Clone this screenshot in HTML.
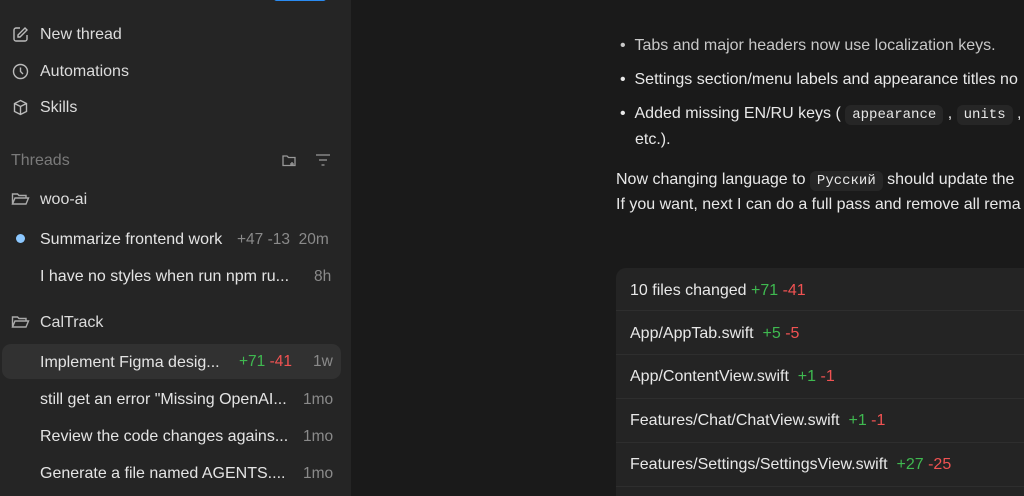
<!DOCTYPE html>
<html><head><meta charset="utf-8"><style>
*{margin:0;padding:0;box-sizing:border-box}
html,body{width:1024px;height:496px;overflow:hidden}
body{background:#1a1a1a;font-family:"Liberation Sans",sans-serif;color:#e6e6e6;position:relative}
.sb{position:absolute;left:0;top:0;width:351px;height:496px;background:#252525}
.a{position:absolute;white-space:nowrap}
.nav{font-size:16px;color:#dcdcdc}
.ic{position:absolute}
.t{font-size:16px;color:#e4e4e4}
.m{font-size:15.5px;color:#8a8a8a}
.g{color:#3fb950}.r{color:#f05252}
.main{font-size:16px;color:#e8e8e8}
code{font-family:"Liberation Mono",monospace;font-size:14px;background:#262626;border-radius:6px;padding:2px 7px}
.card{position:absolute;left:616px;top:268px;width:420px;height:228px;background:#242424;border-radius:10px 10px 0 0;overflow:hidden}
.row{position:absolute;left:0;width:420px;border-top:1px solid #2e2e2e}
</style></head><body>
<div class="sb">
<div class="a" style="left:274px;top:-4px;width:52px;height:5px;background:#2a8bf2;border-radius:3px"></div>
<svg class="ic" style="left:12px;top:26px" width="17" height="17" viewBox="0 0 17 17" fill="none" stroke="#bbb" stroke-width="1.4"><path d="M8 2H4a2 2 0 0 0-2 2v9a2 2 0 0 0 2 2h9a2 2 0 0 0 2-2V9"/><path d="M13 2l2 2-7 7H6V9z"/></svg>
<div class="a nav" style="left:40px;top:26px">New thread</div>
<svg class="ic" style="left:12px;top:63px" width="17" height="17" viewBox="0 0 17 17" fill="none" stroke="#bbb" stroke-width="1.4"><circle cx="8.5" cy="8.5" r="7"/><path d="M8.5 4.5v4l2.5 2.5"/></svg>
<div class="a nav" style="left:40px;top:63px">Automations</div>
<svg class="ic" style="left:12px;top:99px" width="17" height="17" viewBox="0 0 17 17" fill="none" stroke="#bbb" stroke-width="1.4"><path d="M8.5 1.5l6 3v8l-6 3-6-3v-8z M2.5 4.5l6 3 6-3 M8.5 7.5v8"/></svg>
<div class="a nav" style="left:40px;top:99px">Skills</div>
<div class="a" style="left:11px;top:152px;font-size:16px;color:#7a7a7a">Threads</div>
<svg class="ic" style="left:281px;top:152px" width="16" height="16" viewBox="0 0 16 16" fill="none" stroke="#999" stroke-width="1.3"><path d="M2 4h4l1.5 1.5H14v8H2z M11 10v4 M9 12h4"/></svg>
<svg class="ic" style="left:315px;top:153px" width="16" height="14" viewBox="0 0 16 14" fill="none" stroke="#999" stroke-width="1.3"><path d="M1 2h14M4 7h8M6.5 12h3"/></svg>
<svg class="ic" style="left:11px;top:191px" width="19" height="16" viewBox="0 0 19 16" fill="none" stroke="#aaa" stroke-width="1.4"><path d="M1.5 13V3h5l1.5 1.5h7V7 M1.5 13l2.5-6h13.5l-2.5 6z"/></svg>
<div class="a nav" style="left:40px;top:191px">woo-ai</div>
<div class="a" style="left:16px;top:234px;width:9px;height:9px;border-radius:50%;background:#8cc8ff"></div>
<div class="a t" style="left:40px;top:231px">Summarize frontend work</div>
<div class="a m" style="left:237px;top:231px">+47 -13 &nbsp;20m</div>
<div class="a t" style="left:40px;top:268px">I have no styles when run npm ru...</div>
<div class="a m" style="left:314px;top:268px">8h</div>
<svg class="ic" style="left:11px;top:314px" width="19" height="16" viewBox="0 0 19 16" fill="none" stroke="#aaa" stroke-width="1.4"><path d="M1.5 13V3h5l1.5 1.5h7V7 M1.5 13l2.5-6h13.5l-2.5 6z"/></svg>
<div class="a nav" style="left:40px;top:314px">CalTrack</div>
<div class="a" style="left:2px;top:344px;width:339px;height:35px;background:#313131;border-radius:9px"></div>
<div class="a t" style="left:40px;top:354px">Implement Figma desig...</div>
<div class="a m" style="left:239px;top:353px"><span class="g">+71</span> <span class="r">-41</span></div>
<div class="a m" style="left:313px;top:353px">1w</div>
<div class="a t" style="left:40px;top:391px">still get an error "Missing OpenAI...</div>
<div class="a m" style="left:303px;top:391px">1mo</div>
<div class="a t" style="left:40px;top:428px">Review the code changes agains...</div>
<div class="a m" style="left:303px;top:428px">1mo</div>
<div class="a t" style="left:40px;top:465px">Generate a file named AGENTS....</div>
<div class="a m" style="left:303px;top:465px">1mo</div>
</div>
<div class="a main" style="left:620px;top:37px;color:#c8c8c8">•&nbsp;&nbsp;Tabs and major headers now use localization keys.</div>
<div class="a main" style="left:620px;top:71px">•&nbsp;&nbsp;Settings section/menu labels and appearance titles no</div>
<div class="a main" style="left:620px;top:105px">•&nbsp;&nbsp;Added missing EN/RU keys ( <code>appearance</code> , <code>units</code> , <code>&nbsp;</code></div>
<div class="a main" style="left:635px;top:131px">etc.).</div>
<div class="a main" style="left:616px;top:171px">Now changing language to <code>Русский</code> should update the</div>
<div class="a main" style="left:616px;top:196px">If you want, next I can do a full pass and remove all rema</div>
<div class="card">
<div class="a main" style="left:14px;top:14px">10 files changed <span class="g">+71</span> <span class="r">-41</span></div>
<div class="row" style="top:42px;height:44px"><div class="a main" style="left:14px;top:14px">App/AppTab.swift &nbsp;<span class="g">+5</span> <span class="r">-5</span></div></div>
<div class="row" style="top:86px;height:44px"><div class="a main" style="left:14px;top:13px">App/ContentView.swift &nbsp;<span class="g">+1</span> <span class="r">-1</span></div></div>
<div class="row" style="top:130px;height:44px"><div class="a main" style="left:14px;top:13px">Features/Chat/ChatView.swift &nbsp;<span class="g">+1</span> <span class="r">-1</span></div></div>
<div class="row" style="top:174px;height:44px"><div class="a main" style="left:14px;top:13px">Features/Settings/SettingsView.swift &nbsp;<span class="g">+27</span> <span class="r">-25</span></div></div>
<div class="row" style="top:218px;height:10px"></div>
</div>
</body></html>
